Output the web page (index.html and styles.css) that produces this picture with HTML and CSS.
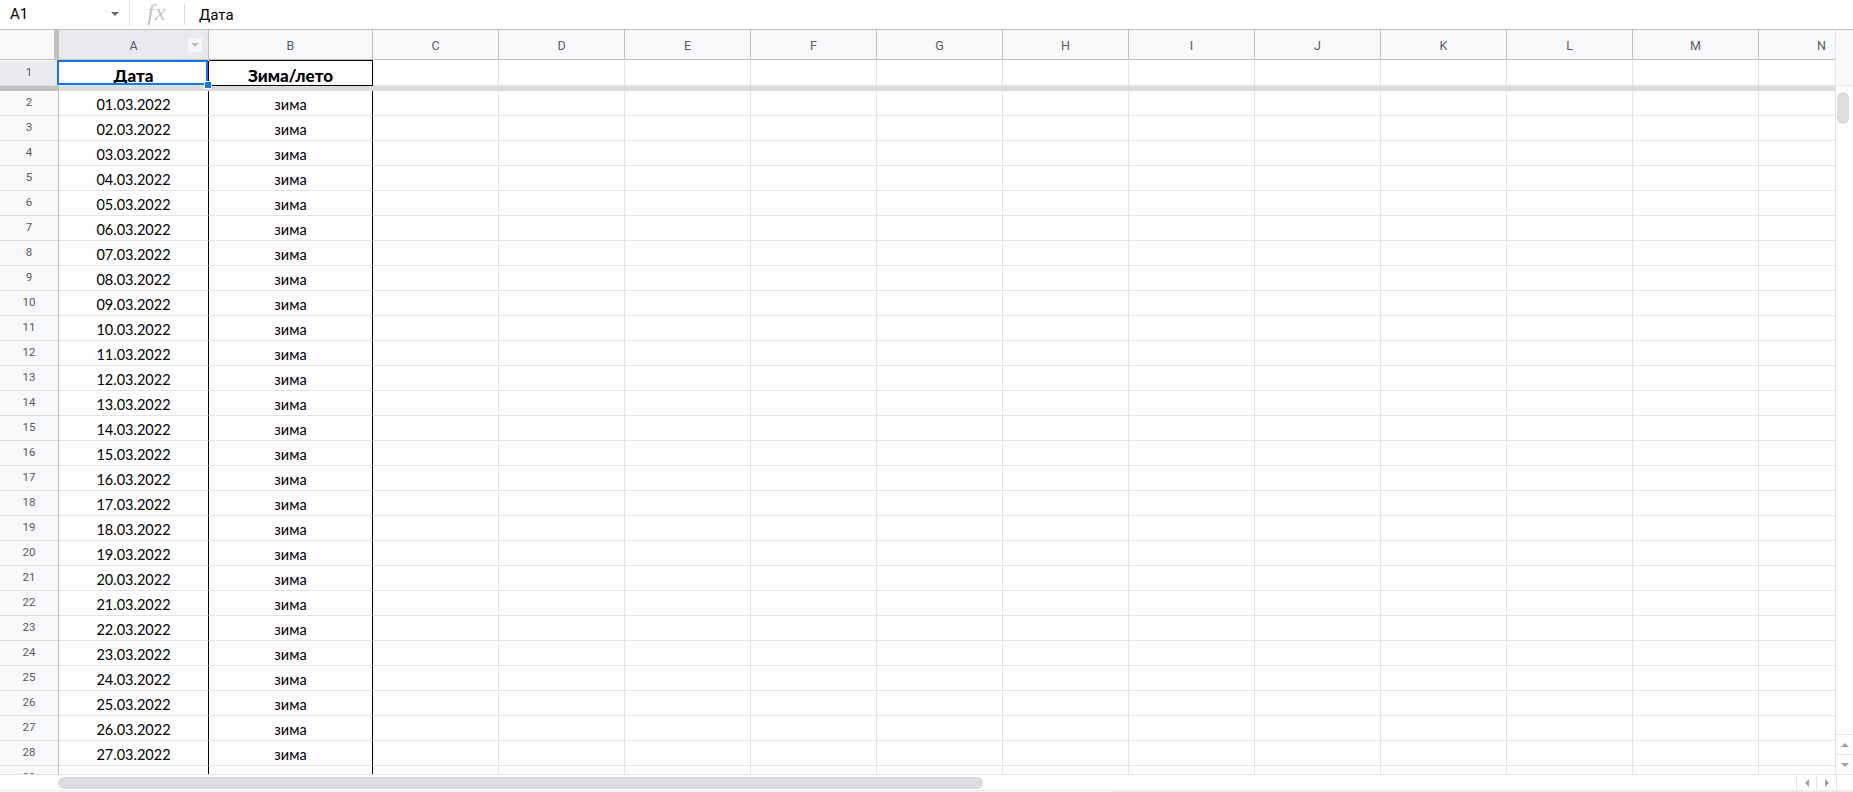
FILE: index.html
```html
<!DOCTYPE html>
<html lang="ru">
<head>
  <meta charset="UTF-8">
  <title>Таблица</title>
  <link rel="stylesheet" href="styles.css">
</head>
<body>

  <div class="formula-bar">
    <div class="name-box">
      <span class="name-box-ref">A1</span>
      <span class="name-box-arrow"></span>
    </div>
    <div class="fx-icon">fx</div>
    <div class="formula-input">Дата</div>
  </div>

  <div class="sheet">
    <div class="grid">
      <div class="row head-row">
        <div class="cell corner"></div>
        <div class="cell col-head w-a is-selected">A<span class="filter-btn"></span></div>
        <div class="cell col-head w-b">B</div>
        <div class="cell col-head w-std">C</div>
        <div class="cell col-head w-std">D</div>
        <div class="cell col-head w-std">E</div>
        <div class="cell col-head w-std">F</div>
        <div class="cell col-head w-std">G</div>
        <div class="cell col-head w-std">H</div>
        <div class="cell col-head w-std">I</div>
        <div class="cell col-head w-std">J</div>
        <div class="cell col-head w-std">K</div>
        <div class="cell col-head w-std">L</div>
        <div class="cell col-head w-std">M</div>
        <div class="cell col-head w-std">N</div>
      </div>

      <div class="row first-row">
        <div class="cell row-head is-selected">1</div>
        <div class="cell w-a col-a bold">Дата
          <span class="selection"><span class="selection-handle"></span></span>
        </div>
        <div class="cell w-b col-b bold boxed">Зима/лето</div>
        <div class="cell w-std"></div>
        <div class="cell w-std"></div>
        <div class="cell w-std"></div>
        <div class="cell w-std"></div>
        <div class="cell w-std"></div>
        <div class="cell w-std"></div>
        <div class="cell w-std"></div>
        <div class="cell w-std"></div>
        <div class="cell w-std"></div>
        <div class="cell w-std"></div>
        <div class="cell w-std"></div>
        <div class="cell w-std"></div>
      </div>

      <div class="freeze-bar"><div class="freeze-bar-head"></div></div>

      <div class="body-rows" id="bodyRows"></div>
    </div>

    <div class="vscroll">
      <div class="vscroll-head"></div>
      <div class="vscroll-track">
        <div class="vscroll-thumb"></div>
      </div>
      <div class="scroll-btn"><span class="arrow arrow-up"></span></div>
      <div class="scroll-btn"><span class="arrow arrow-down"></span></div>
    </div>
  </div>

  <div class="hscroll">
    <div class="hscroll-spacer"></div>
    <div class="hscroll-track">
      <div class="hscroll-thumb"></div>
    </div>
    <div class="scroll-btn-h"><span class="arrow arrow-left"></span></div>
    <div class="scroll-btn-h"><span class="arrow arrow-right"></span></div>
    <div class="scroll-corner"></div>
  </div>

  <div class="tab-strip"><div class="tab-strip-right"></div></div>

  <script>
    const body = document.getElementById('bodyRows');

    for (let i = 2; i <= 29; i++) {
      const day = String(i - 1).padStart(2, '0');
      const row = document.createElement('div');
      row.className = 'row';

      // last row is only partly visible, its values sit below the fold
      const date = i < 29 ? day + '.03.2022' : '';
      const season = i < 29 ? 'зима' : '';

      let html = '<div class="cell row-head">' + i + '</div>';
      html += '<div class="cell w-a col-a">' + date + '</div>';
      html += '<div class="cell w-b col-b">' + season + '</div>';
      for (let c = 0; c < 12; c++) {
        html += '<div class="cell w-std"></div>';
      }

      row.innerHTML = html;
      body.appendChild(row);
    }
  </script>

</body>
</html>
```

FILE: styles.css
```css
body {
  margin: 0;
  font-family: Roboto, "Liberation Sans", sans-serif;
  background: #fff;
  overflow: hidden;
  height: 792px;
}

/* formula bar */
.formula-bar {
  display: flex;
  align-items: center;
  height: 29px;
  background: #fff;
}

.name-box {
  box-sizing: border-box;
  width: 130px;
  height: 26px;
  align-self: flex-start;
  display: flex;
  align-items: center;
  padding: 2px 10px 0 10px;
  border-right: 1px solid #e0e0e0;
}

.name-box-ref {
  flex: 1;
  font-size: 15px;
  color: #000;
}

.name-box-arrow {
  width: 0;
  height: 0;
  border-left: 4px solid transparent;
  border-right: 4px solid transparent;
  border-top: 4px solid #5f6368;
}

.fx-icon {
  width: 54px;
  text-align: center;
  font-family: "Liberation Serif", serif;
  font-style: italic;
  font-size: 24px;
  color: #c4c4c4;
  letter-spacing: 1px;
  margin-top: -4px;
}

.formula-input {
  height: 20px;
  border-left: 1px solid #dadce0;
  padding: 1px 0 0 14px;
  font-size: 15px;
  color: #000;
  line-height: 20px;
}

/* sheet */
.sheet {
  display: flex;
  height: 745px;
}

.grid {
  width: 1835px;
  display: flex;
  flex-direction: column;
  overflow: hidden;
}

.row {
  display: flex;
  height: 25px;
  flex: none;
}

.cell {
  box-sizing: border-box;
  flex: none;
  height: 100%;
  border-right: 1px solid #e2e3e3;
  border-bottom: 1px solid #e2e3e3;
  display: flex;
  align-items: flex-end;
  justify-content: center;
  font-family: Lato, "Liberation Sans", sans-serif;
  font-size: 14.5px;
  line-height: 17px;
  padding-bottom: 2px;
  color: #000;
  position: relative;
}

.w-a { width: 150px; }
.w-b { width: 164px; }
.w-std { width: 126px; }

.col-a { border-right-color: #000; }
.col-b { border-right-color: #000; }

.bold {
  font-weight: 900;
  font-size: 17px;
  padding-bottom: 1px;
}

.boxed {
  border-bottom-color: #000;
  box-shadow: 0 -1px 0 #000;
}

/* headers */
.head-row {
  height: 31px;
  border-top: 1px solid #c0c0c0;
}

.head-row .cell {
  height: 30px;
  background: #f8f9fa;
  border-right-color: #c0c0c0;
  border-bottom-color: #c0c0c0;
}

.col-head {
  align-items: center;
  padding: 1px 0 0 0;
  font-family: Roboto, "Liberation Sans", sans-serif;
  font-size: 12.5px;
  color: #575b60;
}

.corner {
  width: 59px;
  border-right: 5px solid #c0c0c0 !important;
}

.cell.is-selected {
  background: #e8eaed;
}

.filter-btn {
  position: absolute;
  right: 6px;
  top: 8px;
  width: 14px;
  height: 14px;
  background: #f5f5f5;
}

.filter-btn::after {
  content: "";
  position: absolute;
  left: 3px;
  top: 5px;
  border-left: 4px solid transparent;
  border-right: 4px solid transparent;
  border-top: 4px solid #bdbdbd;
}

.row-head {
  width: 59px;
  background: #f8f9fa;
  border-right-color: #c0c0c0;
  border-bottom-color: #dcdcdc;
  align-items: center;
  padding: 0 0 1px 0;
  font-family: Roboto, "Liberation Sans", sans-serif;
  font-size: 11.5px;
  color: #575b60;
}

/* selected cell */
.selection {
  position: absolute;
  top: -1px;
  left: -2px;
  right: 0;
  bottom: 0;
  border: 2px solid #1a73e8;
  z-index: 2;
}

.selection-handle {
  position: absolute;
  right: -6px;
  bottom: -6px;
  width: 6px;
  height: 6px;
  background: #1a73e8;
  border: 1px solid #fff;
}

.freeze-bar {
  height: 5px;
  flex: none;
  background: #dadce0;
}

.freeze-bar-head {
  width: 59px;
  height: 100%;
  background: #c0c0c0;
}

.body-rows {
  flex: 1;
  overflow: hidden;
}

/* vertical scroll */
.vscroll {
  box-sizing: border-box;
  width: 18px;
  display: flex;
  flex-direction: column;
  border-left: 1px solid #e2e3e3;
}

.vscroll-head {
  height: 55px;
  background: #f8f9fa;
  border-top: 1px solid #c0c0c0;
  border-bottom: 1px solid #e8eaed;
}

.vscroll-track {
  flex: 1;
  position: relative;
}

.vscroll-thumb {
  position: absolute;
  top: 6px;
  left: 1px;
  width: 12px;
  height: 32px;
  border-radius: 6px;
  background: #dadce0;
}

.scroll-btn {
  height: 19px;
  border-top: 1px solid #e2e3e3;
  display: flex;
  align-items: center;
  justify-content: center;
}

/* horizontal scroll */
.hscroll {
  display: flex;
  height: 15px;
  border-top: 1px solid #e2e3e3;
}

.hscroll-spacer {
  width: 58px;
}

.hscroll-track {
  flex: 1;
  position: relative;
}

.hscroll-thumb {
  position: absolute;
  top: 2px;
  left: 0;
  width: 925px;
  height: 12px;
  border-radius: 6px;
  background: #dadce0;
}

.scroll-btn-h {
  width: 19px;
  border-left: 1px solid #e2e3e3;
  display: flex;
  align-items: center;
  justify-content: center;
}

.scroll-corner {
  width: 16px;
  border-left: 1px solid #e2e3e3;
}

.arrow {
  width: 0;
  height: 0;
}

.arrow-up {
  border-left: 4px solid transparent;
  border-right: 4px solid transparent;
  border-bottom: 4px solid #9aa0a6;
}

.arrow-down {
  border-left: 4px solid transparent;
  border-right: 4px solid transparent;
  border-top: 4px solid #9aa0a6;
}

.arrow-left {
  border-top: 4px solid transparent;
  border-bottom: 4px solid transparent;
  border-right: 4px solid #9aa0a6;
}

.arrow-right {
  border-top: 4px solid transparent;
  border-bottom: 4px solid transparent;
  border-left: 4px solid #9aa0a6;
}

.tab-strip {
  display: flex;
  height: 3px;
  background: #f8f9fa;
  border-top: 1px solid #e8eaed;
}

.tab-strip-right {
  margin-left: 1114px;
  flex: 1;
  background: #eeeeee;
}
```
